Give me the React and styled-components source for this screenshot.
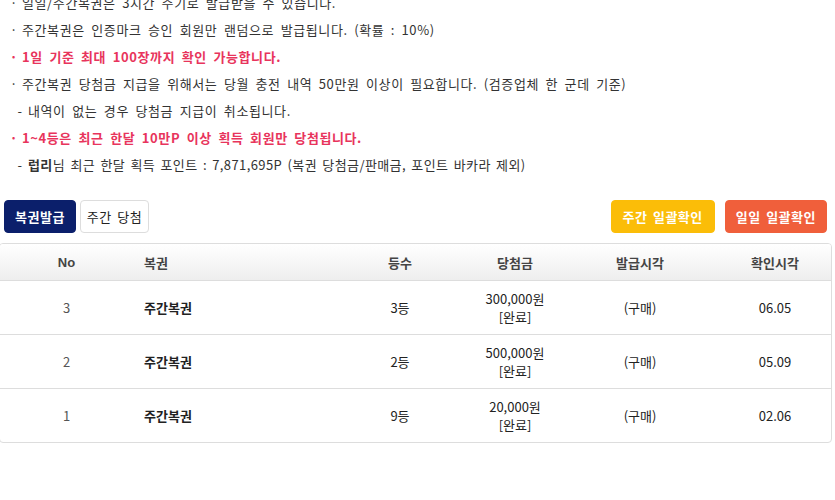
import React from 'react';
import styled, { createGlobalStyle } from 'styled-components';

const GlobalStyle = createGlobalStyle`
  body {
    margin: 0;
    background: #fff;
    font-family: "Noto Sans CJK KR", "Noto Sans", sans-serif;
    color: #333;
  }
`;

const notices = [
  { type: 'dot', text: '일일/주간복권은 3시간 주기로 발급받을 수 있습니다.' },
  { type: 'dot', text: '주간복권은 인증마크 승인 회원만 랜덤으로 발급됩니다. (확률 : 10%)' },
  { type: 'dot', text: '1일 기준 최대 100장까지 확인 가능합니다.', red: true },
  { type: 'dot', text: '주간복권 당첨금 지급을 위해서는 당월 충전 내역 50만원 이상이 필요합니다. (검증업체 한 군데 기준)' },
  { type: 'dash', text: '내역이 없는 경우 당첨금 지급이 취소됩니다.' },
  { type: 'dot', text: '1~4등은 최근 한달 10만P 이상 획득 회원만 당첨됩니다.', red: true },
];

const rows = [
  { no: 3, name: '주간복권', rank: '3등', prize: '300,000원', time: '(구매)', check: '06.05' },
  { no: 2, name: '주간복권', rank: '2등', prize: '500,000원', time: '(구매)', check: '05.09' },
  { no: 1, name: '주간복권', rank: '9등', prize: '20,000원', time: '(구매)', check: '02.06' },
];

const App = () => {
  return (
    <Page>
      <GlobalStyle />
      <NoticeList>
        {notices.map((n, i) => (
          <Notice key={i} $dash={n.type === 'dash'} $red={n.red}>
            <Mark>{n.type === 'dash' ? '-' : '·'}</Mark>
            {n.text}
          </Notice>
        ))}
        <Notice $dash $tight>
          <Mark>-</Mark>
          <b>럽리</b>님 최근 한달 획득 포인트 : 7,871,695P (복권 당첨금/판매금, 포인트 바카라 제외)
        </Notice>
      </NoticeList>

      <Toolbar>
        <Group $gap="4px">
          <Button $bg="#0b1f6b" $color="#fff" $pad="10px" $bold>복권발급</Button>
          <Button $bg="#fff" $color="#222" $border="#ddd" $pad="6px">주간 당첨</Button>
        </Group>
        <Group $gap="10px">
          <Button $bg="#fbbd08" $color="#fff" $pad="11px" $bold>주간 일괄확인</Button>
          <Button $bg="#f05f3b" $color="#fff" $pad="10px" $bold>일일 일괄확인</Button>
        </Group>
      </Toolbar>

      <Table>
        <thead>
          <tr>
            <Th $w="133px">No</Th>
            <Th $align="left" $pad="11px">복권</Th>
            <Th $w="138px">등수</Th>
            <Th $w="92px">당첨금</Th>
            <Th $w="158px">발급시각</Th>
            <Th $w="112px">확인시각</Th>
          </tr>
        </thead>
        <tbody>
          {rows.map((r) => (
            <tr key={r.no}>
              <Td $muted>{r.no}</Td>
              <Td $align="left" $pad="11px" $bold>{r.name}</Td>
              <Td>{r.rank}</Td>
              <Td>
                {r.prize}
                <br />
                [완료]
              </Td>
              <Td>{r.time}</Td>
              <Td>{r.check}</Td>
            </tr>
          ))}
        </tbody>
      </Table>
    </Page>
  );
};

const Page = styled.div`
  width: 835px;
  height: 500px;
  overflow: hidden;
`;

const NoticeList = styled.ul`
  list-style: none;
  margin: -11px 0 0;
  padding: 0 0 0 8px;
`;

const Notice = styled.li`
  font-size: 13px;
  line-height: 27px;
  height: 27px;
  white-space: nowrap;
  letter-spacing: ${(p) => (p.$tight ? '0.4px' : '0.6px')};
  word-spacing: ${(p) => (p.$tight ? '2px' : '3px')};
  color: ${(p) => (p.$red ? '#e8345c' : '#333')};
  font-weight: ${(p) => (p.$red ? 700 : 400)};
  padding-left: ${(p) => (p.$dash ? '6px' : '0')};

  b {
    font-weight: 700;
  }
`;

const Mark = styled.span`
  display: inline-block;
  width: 12px;
  text-align: center;
  margin-right: 2px;
`;

const Toolbar = styled.div`
  display: flex;
  justify-content: space-between;
  align-items: center;
  padding: 0 8px 0 4px;
  margin-top: 22px;
`;

const Group = styled.div`
  display: flex;
  gap: ${(p) => p.$gap};
`;

const Button = styled.button`
  height: 33px;
  padding: 0 ${(p) => p.$pad};
  background: ${(p) => p.$bg};
  color: ${(p) => p.$color};
  border: 1px solid ${(p) => p.$border || p.$bg};
  border-radius: 4px;
  font-family: "Noto Sans CJK KR", sans-serif;
  font-size: 13px;
  letter-spacing: 0.5px;
  word-spacing: 2px;
  font-weight: ${(p) => (p.$bold ? 700 : 400)};
  cursor: pointer;
`;

const Table = styled.table`
  width: 833px;
  margin: 10px 0 0 -1px;
  border-collapse: separate;
  border-spacing: 0;
  border: 1px solid #ddd;
  border-radius: 4px;
  overflow: hidden;
  font-size: 13px;
`;

const Th = styled.th`
  width: ${(p) => p.$w || 'auto'};
  height: 36px;
  padding: 0 0 0 ${(p) => p.$pad || '0'};
  text-align: ${(p) => p.$align || 'center'};
  font-weight: 700;
  color: #444;
  background: linear-gradient(#ffffff, #eeeeee);
  border-bottom: 1px solid #ddd;
  font-family: "Liberation Sans", "Noto Sans CJK KR", sans-serif;
`;

const Td = styled.td`
  height: 53px;
  padding: 0 0 0 ${(p) => p.$pad || '0'};
  text-align: ${(p) => p.$align || 'center'};
  font-weight: ${(p) => (p.$bold ? 700 : 400)};
  color: ${(p) => (p.$muted ? '#555' : '#222')};
  line-height: 18px;
  tr:not(:last-child) > & {
    border-bottom: 1px solid #ddd;
  }
`;

export default App;
